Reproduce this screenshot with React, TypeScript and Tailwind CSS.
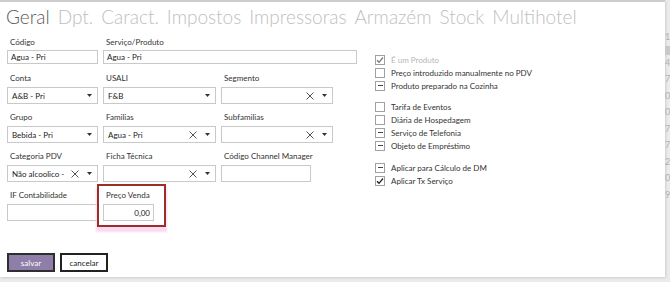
import type { ReactNode } from "react";

const tabs = ["Geral", "Dpt.", "Caract.", "Impostos", "Impressoras", "Armazém", "Stock", "Multihotel"];

function Field({ label, children }: { label: string; children: ReactNode }) {
  return (
    <div className="flex flex-col">
      <span className="h-[12px] pl-[3px] text-[8px] leading-[12px] text-[#333]">{label}</span>
      <div className="mt-[3px]">{children}</div>
    </div>
  );
}

function TextBox({ value = "", w, right = false }: { value?: string; w: number; right?: boolean }) {
  return (
    <div
      className={`flex h-[17px] items-center border border-[#c9c9c9] bg-white px-[3px] text-[8px] text-[#222] ${right ? "justify-end" : ""}`}
      style={{ width: w }}
    >
      {value}
    </div>
  );
}

function SelectBox({ value = "", w, clear = false }: { value?: string; w: number; clear?: boolean }) {
  return (
    <div
      className="flex h-[17px] items-center border border-[#c9c9c9] bg-white pl-[4px] text-[8px] text-[#222]"
      style={{ width: w }}
    >
      <span className="min-w-0 flex-1 whitespace-nowrap">{value}</span>
      {clear && (
        <svg width="8" height="8" viewBox="0 0 8 8" className="mr-[8px] shrink-0">
          <path d="M0.5 0.5 L7.5 7.5 M7.5 0.5 L0.5 7.5" stroke="#555" strokeWidth="1" />
        </svg>
      )}
      <svg width="5" height="3" viewBox="0 0 5 3" className="mr-[5px] shrink-0">
        <path d="M0 0 H5 L2.5 3 Z" fill="#333" />
      </svg>
    </div>
  );
}

type CheckState = "checked" | "empty" | "dash";

function Check({ state, label, disabled = false }: { state: CheckState; label: string; disabled?: boolean }) {
  return (
    <div className="flex h-[13px] items-center gap-[6px]">
      <div className="flex h-[10px] w-[10px] items-center justify-center border border-[#a0a0a0] bg-white">
        {state === "checked" && (
          <svg width="8" height="8" viewBox="0 0 8 8">
            <path d="M1 4.2 L3 6.3 L7 1.5" fill="none" stroke={disabled ? "#777" : "#222"} strokeWidth="1.3" />
          </svg>
        )}
        {state === "dash" && <div className="h-[1px] w-[5px] bg-[#444]" />}
      </div>
      <span className={`text-[8px] ${disabled ? "text-[#b5b5b5]" : "text-[#333]"}`}>{label}</span>
    </div>
  );
}

export default function App() {
  return (
    <div className="flex h-[282px] w-[670px] overflow-hidden bg-[#ebebeb] font-['Lato',sans-serif]">
      <div className="flex h-[277px] w-[665px] shrink-0 flex-col border-t-2 border-[#cdcdcd] bg-white shadow-[1px_1px_2px_rgba(0,0,0,0.12)]">
        <div className="flex h-[28px] items-center gap-[8px] pl-[6px] text-[19px] font-light leading-none">
          {tabs.map((t, i) => (
            <span key={t} className={i === 0 ? "text-[#5b5b5b]" : "text-[#c0c0c0]"}>
              {t}
            </span>
          ))}
        </div>

        <div className="flex">
          <div className="w-[375px] shrink-0 pl-[7px] pt-[6px]">
            <div className="flex gap-[5px]">
              <div className="flex flex-col">
                <span className="h-[12px] pl-[3px] text-[8px] leading-[12px] text-[#333]">Código</span>
                <div className="mt-[2px] flex h-[14px] w-[91px] items-center border border-[#c9c9c9] px-[3px] text-[8px] text-[#222]">
                  Agua - Pri
                </div>
              </div>
              <div className="flex flex-col">
                <span className="h-[12px] pl-[3px] text-[8px] leading-[12px] text-[#333]">Serviço/Produto</span>
                <div className="mt-[2px] flex h-[14px] w-[254px] items-center border border-[#c9c9c9] px-[3px] text-[8px] text-[#222]">
                  Agua - Pri
                </div>
              </div>
            </div>

            <div className="mt-[8px] grid grid-cols-[91px_113px_112px] gap-x-[5px] gap-y-[7px]">
              <Field label="Conta">
                <SelectBox value="A&B - Pri" w={91} />
              </Field>
              <Field label="USALI">
                <SelectBox value="F&B" w={113} />
              </Field>
              <Field label="Segmento">
                <SelectBox w={112} clear />
              </Field>

              <Field label="Grupo">
                <SelectBox value="Bebida - Pri" w={91} />
              </Field>
              <Field label="Familias">
                <SelectBox value="Agua - Pri" w={113} clear />
              </Field>
              <Field label="Subfamilias">
                <SelectBox w={112} clear />
              </Field>

              <Field label="Categoria PDV">
                <SelectBox value="Não alcoolico -" w={91} clear />
              </Field>
              <Field label="Ficha Técnica">
                <SelectBox w={113} clear />
              </Field>
              <Field label="Código Channel Manager">
                <TextBox w={90} />
              </Field>

              <Field label="IF Contabilidade">
                <TextBox w={91} />
              </Field>
              <div className="relative">
                <Field label="Preço Venda">
                  <TextBox value="0,00" w={51} right />
                </Field>
                <div className="absolute left-[-6px] top-[-5px] h-[43px] w-[69px] border-2 border-[#9c2e26] shadow-[0_4px_2px_1px_#f9d9f3]" />
              </div>
            </div>
          </div>

          <div className="flex flex-col pt-[23px]">
            <Check state="checked" label="É um Produto" disabled />
            <Check state="empty" label="Preço introduzido manualmente no PDV" />
            <Check state="dash" label="Produto preparado na Cozinha" />
            <div className="mt-[8px]" />
            <Check state="empty" label="Tarifa de Eventos" />
            <Check state="empty" label="Diária de Hospedagem" />
            <Check state="dash" label="Serviço de Telefonia" />
            <Check state="dash" label="Objeto de Empréstimo" />
            <div className="mt-[9px]" />
            <Check state="dash" label="Aplicar para Cálculo de DM" />
            <Check state="checked" label="Aplicar Tx Serviço" />
          </div>
        </div>

        <div className="mt-auto flex gap-[5px] pb-[5px] pl-[7px]">
          <button className="flex h-[19px] w-[48px] items-center justify-center border-2 border-[#2e2e2e] bg-[#8e7ea8] text-[8px] text-white">
            salvar
          </button>
          <button className="flex h-[19px] w-[48px] items-center justify-center border-2 border-[#222] bg-white text-[8px] text-[#222]">
            cancelar
          </button>
        </div>
      </div>

      <div className="flex w-[5px] shrink-0 flex-col pt-[29px] text-[9px] leading-[16.5px] text-[#b0b0b0]">
        <span>1</span>
        <span className="h-[9px] bg-[#c9c9c9]" />
        {["4", "7", "0", "0", "7", "7", "2", "0", "9"].map((d, i) => (
          <span key={i}>{d}</span>
        ))}
      </div>
    </div>
  );
}
